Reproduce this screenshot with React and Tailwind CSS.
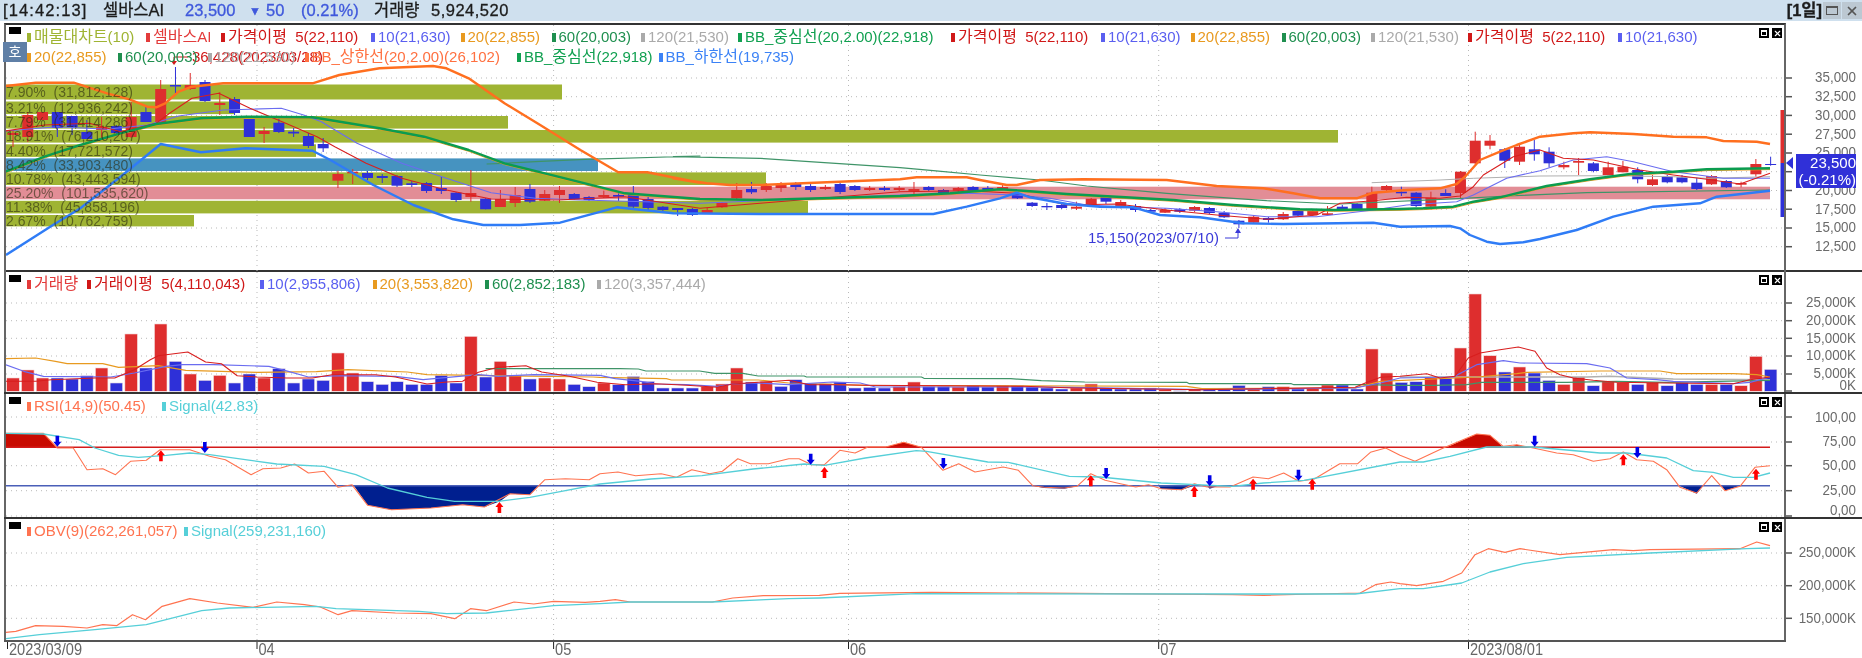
import React from 'react';
import { X } from 'lucide-react';

const RED = '#de2e2e';
const BLUE = '#2e30d8';
const barX = (i) => 13 + 14.77 * i;

// zoomed reference coords -> page coords
const z = (x0, y0, xs) => (pts) => pts.map(([x, y]) => [x0 + x / xs, y0 + y / 3]);
const pts = (list) => list.map(([x, y]) => `${x.toFixed(1)},${y.toFixed(1)}`).join(' ');

const z1 = z(0, 0, 2.24);
const z9 = z(240, 120, 3);
const z8 = z(900, 100, 3);
const z12 = z(1340, 110, 3);
const zV3 = z(0, 225, 2.529);
const zV10 = z(600, 290, 1.96);
const zV4 = z(1400, 225, 3);
const zR5 = z(0, 430, 2.529);
const zR11 = z(600, 395, 1.96);
const zR6 = z(1400, 430, 3);

const CANDLES = [
  ['R', 133, 135, 130, 147], ['R', 115, 137, 112, 142], ['R', 112, 120, 112, 120], ['B', 112, 128, 112, 137],
  ['B', 116, 127, 116, 135], ['B', 132, 139, 120, 139], ['R', 127, 130, 117, 138], ['B', 126, 133, 125, 135],
  ['R', 117, 137, 102, 138], ['B', 112, 122, 107, 122], ['R', 89, 123, 80, 125], ['B', 85, 86.5, 67, 95],
  ['R', 85, 89, 73, 90], ['B', 82, 101, 80, 102], ['R', 103, 105, 92, 115], ['B', 99, 113, 97, 115],
  ['B', 119, 137, 119, 137], ['R', 131, 134, 127, 143], ['B', 122.7, 132, 117, 133], ['B', 131.7, 133.5, 128, 137],
  ['B', 136, 146, 133, 148], ['B', 144, 148.3, 138, 152], ['R', 174, 180.7, 170.7, 188], ['R', 171.7, 173.3, 169, 184],
  ['B', 173, 178, 171, 180], ['B', 176, 178, 174, 183], ['B', 176, 185.7, 175, 187], ['B', 183.3, 185, 181, 187],
  ['B', 183, 191, 182, 193], ['B', 188, 191, 177, 194], ['B', 192.7, 200, 192, 202], ['R', 193, 197, 170, 201.7],
  ['B', 198.7, 209.3, 198, 209.3], ['R', 199, 207, 190, 207], ['R', 195, 203, 187, 207], ['B', 189, 201.7, 184, 203],
  ['R', 194, 200.7, 190, 201], ['R', 190, 195, 186, 203], ['B', 194, 199.3, 193, 200], ['B', 197, 200, 196, 201],
  ['R', 195, 197, 190.7, 198], ['B', 195, 196.7, 191.7, 201], ['B', 194, 206.7, 186, 208], ['B', 199, 208, 197, 210.7],
  ['B', 206.7, 210, 206, 211], ['B', 208, 210, 208, 216], ['B', 209, 215, 208, 216], ['R', 210, 213.3, 208, 214],
  ['R', 202.7, 207.3, 202, 208], ['R', 190, 198.3, 183, 200], ['B', 189, 192.3, 182, 194], ['R', 186, 190, 183, 192],
  ['R', 184, 188, 182, 192], ['B', 184, 187, 182, 190], ['B', 186, 190, 184, 192], ['R', 187, 189, 185, 190],
  ['B', 184, 192, 183, 194], ['B', 186, 190, 185, 191], ['R', 188, 190, 186, 191], ['B', 188, 190, 186, 191],
  ['R', 188, 190, 186, 191], ['R', 189, 191, 182, 195], ['B', 187, 190, 186, 191], ['B', 190, 193, 189, 194],
  ['R', 188, 190.7, 187, 192], ['B', 187, 190.7, 186, 192], ['B', 188, 190, 186, 191], ['R', 187, 189, 185, 190],
  ['B', 194, 198.3, 193, 199], ['B', 202.7, 206, 202, 207], ['B', 206, 207.3, 203, 210], ['B', 205, 208, 204, 209],
  ['R', 206.7, 208.7, 201.7, 210], ['R', 198.7, 206, 198, 207], ['B', 196.7, 201.7, 196, 204], ['R', 202, 206, 200, 208.3],
  ['B', 206, 210, 204, 212], ['B', 210, 211.7, 209, 213], ['R', 210, 212.7, 208, 213], ['B', 209.3, 211.7, 208, 213],
  ['R', 207, 210.7, 206, 212], ['B', 208, 213, 207, 214], ['B', 212.7, 217.3, 211, 218], ['B', 220.7, 224.3, 220, 228],
  ['R', 216.7, 222.7, 215, 224], ['B', 218, 220, 217, 222.7], ['R', 214, 219.3, 212, 220], ['B', 211, 215.7, 210, 216],
  ['R', 211, 215, 209, 216], ['R', 213.3, 215, 206, 215], ['B', 206.7, 210, 205, 211], ['B', 204, 209, 203, 209],
  ['R', 192.7, 209.3, 186.7, 210], ['R', 186, 190, 185, 191.7], ['B', 191.7, 193.3, 186.7, 196], ['B', 192.7, 206, 192, 207],
  ['R', 197.7, 206.7, 191.7, 209.3], ['B', 193, 196, 189.3, 196], ['R', 171.7, 193, 171, 198.3], ['R', 140.7, 163.3, 131.7, 164],
  ['R', 140.7, 145.7, 135, 149.3], ['B', 149.3, 160.7, 148, 168], ['R', 146.7, 161.7, 145, 165], ['B', 149.3, 154.3, 140, 160.7],
  ['B', 151.7, 163.3, 147.3, 167.3], ['R', 165, 167.3, 161.7, 169.3], ['R', 161, 162.7, 158, 175], ['B', 163.3, 171, 162, 172.3],
  ['R', 167.3, 175, 161.7, 175], ['R', 166.7, 172.3, 161, 172.3], ['B', 170, 179.3, 167.3, 183.3], ['R', 179.3, 185, 175, 186],
  ['B', 176.7, 182.3, 175, 183.3], ['B', 177.3, 182.3, 175, 183.3], ['B', 182.7, 189, 177.7, 190], ['R', 176, 184.3, 175, 185],
  ['B', 181, 187.3, 180, 188], ['R', 183, 184.7, 181.7, 187.3], ['R', 164, 174.3, 159, 176.7], ['B', 164, 165, 156.7, 165.7],
];

// [colour, top of bar in reference crop]
const VOLUME = [
  ...[['R', 465], ['R', 441], ['R', 465], ['B', 465], ['B', 468], ['B', 458], ['R', 435], ['B', 480], ['R', 333], ['B', 435],
    ['R', 303], ['B', 415], ['R', 453], ['B', 472], ['R', 457], ['B', 480], ['B', 453], ['R', 465], ['B', 437], ['B', 480],
    ['B', 468], ['B', 472], ['R', 390], ['R', 450], ['B', 476], ['B', 484], ['B', 476], ['B', 484], ['B', 484], ['B', 457],
    ['B', 480], ['R', 340], ['B', 462], ['R', 415], ['R', 458], ['B', 468], ['R', 465], ['R', 468], ['B', 484], ['B', 491]]
    .map(([c, t]) => [c, (505 - t) / 3]),
  ...[['R', 285], ['B', 290], ['B', 265], ['B', 280], ['B', 300], ['B', 300], ['B', 300], ['R', 295], ['R', 288], ['R', 240],
    ['B', 282], ['R', 280], ['B', 295], ['B', 275], ['B', 287], ['B', 287], ['B', 282], ['B', 300], ['B', 298], ['B', 300],
    ['R', 295], ['R', 282], ['B', 295], ['B', 295], ['R', 297], ['B', 292], ['B', 297], ['R', 293], ['B', 293], ['B', 297],
    ['B', 300], ['B', 303], ['R', 300], ['R', 288], ['B', 300], ['B', 303], ['B', 303], ['B', 300], ['R', 305], ['B', 308],
    ['R', 305], ['B', 305], ['B', 305], ['B', 292], ['R', 303], ['B', 296], ['R', 296], ['B', 303], ['R', 302], ['R', 291],
    ['B', 291], ['B', 303], ['R', 183], ['R', 255]]
    .map(([c, t]) => [c, (310 - t) / 3]),
  ...[['B', 478], ['B', 476], ['R', 464], ['B', 466], ['R', 375], ['R', 213], ['R', 398], ['B', 447], ['R', 432], ['B', 450],
    ['B', 472], ['R', 484], ['R', 462], ['B', 488], ['R', 475], ['R', 478], ['B', 484], ['R', 478], ['B', 488], ['B', 478],
    ['B', 484], ['R', 484], ['B', 484], ['R', 488], ['R', 400], ['B', 439]]
    .map(([c, t]) => [c, (505 - t) / 3]),
];

const BB_UPPER = [
  ...z1([[12, 258], [80, 248], [165, 248], [240, 280], [290, 298], [330, 320], [350, 322], [370, 310], [400, 275], [430, 260], [500, 250], [700, 250], [760, 225], [850, 205], [970, 198], [1000, 205], [1050, 235], [1130, 310], [1210, 375], [1300, 450], [1385, 517], [1450, 517], [1568, 548]]),
  ...z9([[1300, 175], [1400, 190], [1470, 195], [1560, 195]]),
  ...z8([[0, 238], [50, 232], [200, 232], [240, 240], [320, 255], [350, 255], [420, 240], [550, 238], [800, 240], [950, 258], [1090, 265], [1180, 280], [1260, 295], [1370, 295]]),
  ...z12([[100, 248], [200, 240], [300, 235], [350, 222], [375, 200], [420, 150], [480, 125], [530, 105], [600, 80], [700, 70], [750, 67], [880, 72], [1000, 80], [1100, 82], [1150, 93], [1250, 95], [1290, 102]]),
];
const BB_MID = [
  ...z1([[12, 515], [100, 470], [180, 435], [270, 400], [350, 372], [450, 355], [550, 350], [700, 352], [850, 385], [950, 410], [1050, 450], [1130, 490], [1250, 530], [1400, 580], [1568, 597]]),
  ...z9([[1560, 240]]),
  ...z8([[0, 288], [150, 280], [300, 268], [370, 272], [500, 282], [650, 290], [820, 300], [1000, 315], [1200, 328], [1300, 330]]),
  ...z12([[180, 297], [250, 295], [340, 290], [400, 275], [480, 262], [620, 228], [750, 208], [870, 192], [1000, 185], [1100, 178], [1290, 175]]),
];
const BB_LOW = [
  [6, 255], [53, 225],
  ...z1([[180, 625], [270, 530], [360, 432], [450, 457], [550, 445], [700, 452], [740, 480]]),
  ...z9([[400, 195], [520, 255], [640, 298], [730, 315], [840, 315], [960, 308], [1130, 262], [1300, 280], [1560, 282]]),
  ...z8([[0, 342], [100, 342], [200, 320], [300, 295], [350, 278], [390, 292], [500, 312], [600, 320], [700, 322], [780, 345], [900, 352], [1030, 370], [1150, 372], [1420, 368], [1500, 380]]),
  ...zV4([[150, 3], [180, 10], [210, 30], [260, 50], [300, 57], [370, 52], [420, 42]]),
  ...z(1400, 0, 3)([[530, 690], [640, 650], [760, 620], [900, 610], [950, 590], [1110, 572]]),
];
const MA5 = [
  ...z1([[12, 393], [100, 375], [200, 370], [270, 395], [350, 370], [380, 340], [430, 295], [490, 280], [560, 325], [640, 370], [710, 410], [750, 440], [820, 490], [900, 535], [1000, 570], [1100, 597], [1250, 600], [1400, 590], [1568, 625]]),
  ...z8([[0, 275], [200, 272], [350, 280], [500, 315], [650, 312], [800, 330], [950, 345], [1100, 358], [1250, 345]]),
  ...z12([[0, 280], [100, 272], [200, 262], [300, 265], [360, 258], [400, 230], [430, 195], [520, 140], [600, 120], [670, 145], [760, 150], [900, 180], [1000, 195], [1100, 208], [1200, 222], [1290, 190]]),
];
const MA10 = [
  ...z1([[12, 393], [100, 383], [130, 380], [240, 388], [330, 375], [400, 348], [500, 330], [630, 325], [680, 345], [720, 365], [800, 430], [900, 490], [1000, 535], [1100, 578], [1200, 595], [1300, 600], [1568, 610]]),
  ...z8([[0, 285], [200, 280], [350, 285], [450, 295], [560, 315], [700, 322], [800, 325], [950, 335], [1100, 350], [1250, 350]]),
  ...z12([[0, 312], [100, 300], [200, 285], [350, 275], [400, 255], [500, 205], [600, 182], [700, 150], [800, 140], [880, 155], [1000, 185], [1150, 205], [1290, 205]]),
];
const MA60 = [
  ...z1([[1090, 492], [1130, 490], [1200, 485], [1310, 478], [1568, 468]]),
  ...z9([[1300, 110], [1560, 115]]),
  ...z8([[0, 203], [100, 212], [240, 225], [420, 240], [560, 258], [800, 280], [1000, 295], [1100, 302]]),
  ...z12([[0, 282], [370, 265], [500, 258], [740, 248], [1290, 240]]),
];
const MA120 = z12([[95, 218], [300, 210], [400, 205], [600, 198], [800, 197], [1000, 200], [1100, 205], [1290, 200]]);

const VOL_MA5 = [
  ...zV3([[15, 475], [90, 475], [130, 470], [240, 465], [290, 465], [340, 440], [380, 410], [400, 398], [475, 387], [520, 417], [560, 422], [600, 458], [650, 462], [725, 465], [790, 465], [840, 455], [950, 455], [1000, 462], [1080, 483], [1130, 477], [1170, 475], [1210, 448], [1260, 433], [1330, 428], [1370, 447], [1440, 460], [1510, 478]]),
  ...zV10([[50, 290], [110, 287], [170, 292], [230, 298], [260, 288], [310, 283], [370, 277], [410, 290], [470, 290], [520, 292], [830, 295], [930, 300], [1180, 305], [1480, 298], [1500, 285], [1530, 268]]),
  ...zV4([[0, 460], [80, 452], [120, 465], [165, 460], [205, 405], [240, 390], [300, 380], [355, 372], [405, 385], [440, 435], [480, 455], [520, 465], [580, 472], [650, 478], [800, 480], [1000, 482], [1050, 470], [1110, 462]]),
];
const VOL_MA10 = [
  ...zV3([[15, 425], [60, 445], [110, 460], [280, 462], [340, 450], [420, 430], [460, 425], [540, 425], [680, 430], [720, 442], [780, 462], [860, 458], [1000, 460], [1070, 470], [1210, 455], [1260, 460], [1350, 455]]),
  ...zV10([[0, 262], [30, 272], [80, 280], [110, 288], [170, 290], [230, 295], [260, 288], [310, 285], [370, 290], [455, 282], [510, 285], [540, 297], [830, 297], [920, 298], [1180, 305], [1480, 300], [1530, 285]]),
  ...zV4([[0, 465], [160, 462], [230, 425], [310, 413], [360, 420], [560, 422], [630, 435], [680, 465], [770, 470], [820, 475], [1000, 482], [1050, 478], [1110, 462]]),
];
const VOL_MA20 = [
  ...zV3([[15, 407], [90, 405], [140, 415], [170, 422], [260, 422], [300, 433], [400, 428], [470, 442], [650, 448], [800, 446], [880, 440], [1030, 447], [1080, 455], [1500, 462]]),
  ...zV10([[0, 268], [130, 272], [140, 276], [310, 276], [370, 285], [520, 292], [1150, 295], [1180, 302], [1480, 300], [1530, 280]]),
  ...zV4([[230, 462], [350, 452], [380, 448], [600, 444], [780, 444], [830, 452], [1000, 452], [1070, 455], [1110, 462]]),
];
const VOL_MA60 = [
  ...zV3([[1228, 437], [1568, 437]]),
  ...zV10([[75, 243], [90, 249], [195, 249], [225, 256], [280, 256], [310, 264], [400, 264], [405, 267], [630, 267], [635, 271], [805, 272], [865, 278], [950, 282], [1150, 283], [1155, 287], [1355, 287], [1360, 290], [1500, 290]]),
  ...zV4([[0, 487], [100, 487], [200, 485], [245, 478], [500, 478], [650, 475], [800, 478], [1110, 472]]),
];
const VOL_MA120 = zV4([[0, 462], [560, 462], [630, 460], [820, 468], [1110, 470]]);

const RSI = [
  ...zR5([[15, 16], [110, 16], [145, 60], [185, 60], [220, 125], [260, 122], [292, 140], [330, 100], [370, 97], [405, 65], [480, 65], [530, 85], [570, 95], [635, 140], [665, 122], [710, 120], [745, 108], [780, 135], [820, 130], [855, 178], [890, 170], [930, 232], [990, 245], [1090, 240], [1170, 230], [1225, 237], [1290, 197], [1340, 200], [1378, 155], [1430, 152], [1490, 155]]),
  ...zR11([[0, 242], [35, 237], [70, 248], [120, 242], [150, 253], [180, 230], [215, 242], [240, 235], [270, 197], [295, 212], [330, 212], [370, 197], [390, 197], [415, 215], [440, 215], [470, 172], [500, 180], [525, 162], [560, 162], [595, 148], [630, 163], [672, 232], [703, 212], [735, 237], [790, 222], [820, 232], [848, 278], [870, 283], [910, 285], [935, 280], [962, 242], [990, 262], [1020, 272], [1050, 282], [1075, 275], [1100, 287], [1140, 290], [1165, 272], [1190, 282], [1235, 282], [1280, 252], [1310, 257], [1340, 240], [1370, 265], [1400, 258], [1450, 212], [1485, 212], [1510, 178], [1540, 165]]),
  ...zR6([[0, 82], [45, 100], [130, 60], [230, 18], [270, 22], [310, 55], [350, 50], [400, 60], [470, 75], [520, 80], [580, 100], [630, 92], [670, 72], [710, 95], [760, 100], [800, 125], [840, 178], [890, 195], [935, 143], [975, 188], [1020, 175], [1065, 118], [1110, 113]]),
];
const RSI_SIGNAL = [
  ...zR5([[15, 16], [110, 18], [200, 35], [240, 60], [300, 82], [350, 88], [420, 82], [480, 75], [530, 80], [620, 95], [700, 108], [820, 115], [900, 140], [980, 180], [1080, 208], [1150, 220], [1260, 220], [1340, 208], [1420, 190]]),
  ...zR11([[0, 273], [100, 258], [200, 248], [300, 228], [400, 213], [440, 217], [520, 195], [620, 173], [640, 175], [760, 207], [800, 208], [920, 250], [980, 252], [1100, 270], [1240, 280], [1300, 270], [1380, 262]]),
  ...zR6([[0, 102], [70, 102], [150, 85], [260, 57], [400, 57], [600, 75], [680, 75], [800, 90], [880, 128], [940, 133], [1000, 148], [1060, 148], [1110, 135]]),
];
const RSI_HOT = [
  zR5([[15, 16], [110, 16], [145, 60], [15, 60]]),
  zR11([[560, 162], [595, 148], [630, 163]]),
  zR6([[140, 58], [230, 18], [270, 22], [310, 58]]),
  zR6([[325, 58], [350, 50], [385, 58]]),
];
const RSI_COLD = [
  zR5([[895, 173], [930, 232], [990, 245], [1090, 240], [1170, 230], [1225, 237], [1265, 220], [1290, 197], [1340, 200], [1362, 173]]),
  zR11([[848, 278], [870, 285], [910, 287], [935, 280]]),
  zR11([[1095, 280], [1100, 287], [1140, 290], [1165, 278]]),
  zR11([[1190, 280], [1195, 287], [1210, 280]]),
  zR6([[838, 173], [890, 197], [910, 173]]),
  zR6([[965, 173], [975, 188], [1020, 173]]),
];
// [x, y, up?]
const RSI_ARROWS = [
  ...zR5([[145, 38], [518, 57]]).map((p) => [...p, false]),
  ...zR5([[407, 85], [1263, 240]]).map((p) => [...p, true]),
  ...zR11([[413, 197], [673, 210], [992, 240], [1195, 262], [1369, 245]]).map((p) => [...p, false]),
  ...zR11([[440, 240], [962, 265], [1165, 297], [1280, 275], [1396, 275]]).map((p) => [...p, true]),
  ...zR6([[404, 38], [712, 72]]).map((p) => [...p, false]),
  ...zR6([[670, 97], [1068, 140]]).map((p) => [...p, true]),
];

const OBV = [
  ...zR5([[15, 613], [40, 610], [90, 593], [160, 595], [220, 600], [260, 590], [295, 593], [335, 560], [368, 575], [410, 535], [480, 512], [550, 525], [640, 538], [700, 522], [770, 530], [810, 537], [855, 560], [890, 548], [1000, 555], [1090, 557], [1150, 572], [1190, 542], [1230, 548], [1300, 522], [1350, 528], [1400, 520], [1480, 523]]),
  ...zR11([[0, 625], [30, 620], [60, 627], [220, 627], [260, 615], [320, 608], [430, 607], [470, 601], [650, 598], [1240, 605], [1300, 607], [1400, 603], [1490, 600], [1520, 575], [1550, 567]]),
  ...zR6([[0, 467], [50, 473], [130, 460], [185, 435], [225, 380], [265, 362], [315, 373], [360, 362], [480, 380], [640, 365], [700, 368], [750, 365], [1020, 362], [1070, 342], [1110, 353]]),
];
const OBV_SIGNAL = [
  ...zR5([[15, 632], [100, 620], [240, 605], [370, 590], [510, 548], [580, 540], [800, 535], [850, 542], [1060, 550], [1130, 557], [1230, 555], [1400, 533]]),
  ...zR11([[0, 632], [60, 627], [220, 627], [370, 617], [430, 615], [620, 602], [1240, 603], [1480, 603]]),
  ...zR6([[0, 482], [70, 482], [185, 465], [270, 432], [370, 407], [500, 388], [750, 375], [1040, 362], [1110, 360]]),
];

// 매물대 rows: [y, height, right edge, colour, label]
const PROFILE = [
  [84.5, 15, 562, '#9fb433', '7.90%  (31,812,128)'],
  [101.5, 12.6, 234, '#9fb433', '3.21%  (12,936,242)'],
  [116, 12.6, 508, '#9fb433', '7.79%  (31,414,286)'],
  [130, 12.6, 1338, '#9fb433', '18.91%  (76,210,207)'],
  [144.3, 12.6, 316, '#9fb433', '4.40%  (17,721,572)'],
  [158.4, 12.6, 598, '#4693c0', '8.42%  (33,903,480)'],
  [172.4, 12.6, 766, '#9fb433', '10.78%  (43,443,594)'],
  [186.7, 12.6, 1770, '#e28d96', '25.20%  (101,535,620)'],
  [200.8, 12.6, 808, '#9fb433', '11.38%  (45,858,196)'],
  [215, 11.4, 194, '#9fb433', '2.67%  (10,762,759)'],
];

const GRID_X = [257, 553.6, 848.5, 1158.7, 1468.5];

const OLIVE = 'text-[#9fb433]';
const LRED = 'text-[#e33b3b]';
const DRED = 'text-[#d01818]';
const MBLUE = 'text-[#5a5ff0]';
const ORANGE = 'text-[#e89a20]';
const GREEN = 'text-[#1f8f4f]';
const GRAY = 'text-[#aaaaaa]';
const BBUP = 'text-[#ff7040]';
const BBMID = 'text-[#10a050]';
const BBLOW = 'text-[#3b82f6]';
const TEAL = 'text-[#56cfd8]';
const CORAL = 'text-[#ff7350]';

const LEGEND_MAIN = [
  [OLIVE, 'w-[119px]', '매물대차트(10)'], [LRED, 'w-[75px]', '셀바스AI'], [DRED, 'w-[150px]', '가격이평  5(22,110)'],
  [MBLUE, 'w-[89.5px]', '10(21,630)'], [ORANGE, 'w-[91px]', '20(22,855)'], [GREEN, 'w-[89.5px]', '60(20,003)'],
  [GRAY, 'w-[97px]', '120(21,530)'], [BBMID, 'w-[213px]', 'BB_중심선(20,2.00)(22,918)'],
  [DRED, 'w-[150px]', '가격이평  5(22,110)'], [MBLUE, 'w-[89.5px]', '10(21,630)'], [ORANGE, 'w-[91px]', '20(22,855)'],
  [GREEN, 'w-[89.5px]', '60(20,003)'], [GRAY, 'w-[97px]', '120(21,530)'], [DRED, 'w-[150px]', '가격이평  5(22,110)'],
  [MBLUE, 'w-[90px]', '10(21,630)'],
  [ORANGE, 'w-[91px]', '20(22,855)'], [GREEN, 'w-[89.5px]', '60(20,003)'], [GRAY, 'w-[97px]', '120(21,530)'],
  [BBUP, 'w-[212.5px]', 'BB_상한선(20,2.00)(26,102)'], [BBMID, 'w-[141.5px]', 'BB_중심선(22,918)'], [BBLOW, 'w-[140px]', 'BB_하한선(19,735)'],
];
const LEGEND_VOLUME = [
  [LRED, 'w-[60px]', '거래량'], [DRED, 'w-[173px]', '거래이평  5(4,110,043)'], [MBLUE, 'w-[112.5px]', '10(2,955,806)'],
  [ORANGE, 'w-[112.5px]', '20(3,553,820)'], [GREEN, 'w-[112px]', '60(2,852,183)'], [GRAY, 'w-[120px]', '120(3,357,444)'],
];
const LEGEND_RSI = [[CORAL, 'w-[135px]', 'RSI(14,9)(50.45)'], [TEAL, 'w-[120px]', 'Signal(42.83)']];
const LEGEND_OBV = [[CORAL, 'w-[157px]', 'OBV(9)(262,261,057)'], [TEAL, 'w-[160px]', 'Signal(259,231,160)']];

// hangul runs a touch larger, so they take the same width as the reference's glyphs
function LegendLabel({ text }) {
  return text.split(/([가-힣]+)/).map((part, i) =>
    /[가-힣]/.test(part) ? <span key={i} className="text-[16px]">{part}</span> : part
  );
}

function Legend({ items }) {
  return (
    <div className="absolute left-[21px] top-[2px] flex w-[1730px] flex-wrap text-[15px] leading-[20px] whitespace-pre">
      {items.map(([color, width, label], i) => (
        <span key={i} className={`flex shrink-0 items-center gap-[3px] ${color} ${width}`}>
          <span className="h-[9px] w-[4px] bg-current" />
          <span><LegendLabel text={label} /></span>
        </span>
      ))}
    </div>
  );
}

function PanelButtons() {
  return (
    <div className="absolute right-[2px] top-[3px] flex gap-[3px]">
      <div className="flex h-[10px] w-[10px] items-center justify-center border-2 border-black bg-white">
        <span className="h-[3px] w-[4px] bg-black" />
      </div>
      <div className="flex h-[10px] w-[10px] items-center justify-center bg-black">
        <X size={9} strokeWidth={3} className="text-white" />
      </div>
    </div>
  );
}

function Line({ data, color, width = 1 }) {
  return <polyline points={pts(data)} fill="none" stroke={color} strokeWidth={width} strokeLinejoin="round" />;
}

function Grid({ ys, top, bottom }) {
  return (
    <g stroke="#b9b9b9" strokeWidth="1" strokeDasharray="1 4">
      {ys.map((y) => <line key={y} x1="6" x2="1784" y1={y} y2={y} />)}
      {GRID_X.map((x) => <line key={x} x1={x} x2={x} y1={top} y2={bottom} />)}
    </g>
  );
}

// right hand scale: [label, tick y, baseline y]
function Scale({ top, height, labels, children }) {
  return (
    <svg viewBox={`1786 ${top} 76 ${height}`} className="block h-full w-[76px]">
      {labels.map(([label, tick, base]) => (
        <g key={label}>
          <line x1="1786" x2="1792" y1={tick} y2={tick} stroke="#555" strokeWidth="1.5" />
          <text transform={`translate(1856 ${base}) scale(1 1.14)`} textAnchor="end" fontSize="13.4" fill="#6a6a6a">{label}</text>
        </g>
      ))}
      {children}
    </svg>
  );
}

function Panel({ top, height, ticks, labels, outerBorder = true, overlay, axisOverlay, scaleExtra, children }) {
  return (
    <div className={`ml-[4px] flex ${outerBorder ? 'border-t-2 border-[#333]' : ''}`} style={{ height: height + (outerBorder ? 2 : 0) }}>
      <div className={`relative h-full w-[1782px] border-x-2 border-[#666] ${outerBorder ? '' : 'box-content border-t-2 border-t-[#333]'}`}>
        <svg viewBox={`6 ${top} 1778 ${height}`} className="absolute inset-0 h-full w-full">
          <Grid ys={ticks} top={top} bottom={top + height} />
          {children}
        </svg>
        {overlay}
        <PanelButtons />
      </div>
      <div className={`relative h-full w-[76px] ${outerBorder ? '' : 'mt-[2px]'}`}>
        <Scale top={top} height={height} labels={labels}>{scaleExtra}</Scale>
        {axisOverlay}
      </div>
    </div>
  );
}

export default function App() {
  const priceTicks = [78, 96.7, 115.4, 134.2, 153, 171.7, 190.5, 209.2, 228, 246.7];
  const priceLabels = ['35,000', '32,500', '30,000', '27,500', '25,000', '22,500', '20,000', '17,500', '15,000', '12,500']
    .map((label, i) => [label, priceTicks[i], priceTicks[i] + 4.3]);

  return (
    <div className="h-[658px] w-[1862px] overflow-hidden bg-white [font-family:'Liberation_Sans','Noto_Sans_CJK_KR',sans-serif] blur-[0.4px]">
      {/* Title bar */}
      <div className="flex h-[21px] items-center bg-[#cfe0ee] pl-[3px] text-[16.5px] leading-none text-[#1c1c1c] [-webkit-text-stroke:0.3px_currentColor]">
        <span className="w-[100px] tracking-[1.1px]">[14:42:13]</span>
        <span className="w-[82px]">셀바스AI</span>
        <span className="w-[64px] text-[#3f58dc]">23,500</span>
        <span className="w-[17px] text-[12px] text-[#3f58dc]">▼</span>
        <span className="w-[35px] text-[#3f58dc]">50</span>
        <span className="w-[73px] text-[#3f58dc]">(0.21%)</span>
        <span className="w-[57px]">거래량</span>
        <span className="tracking-[0.5px]">5,924,520</span>
        <span className="ml-auto font-bold">[1일]</span>
        <div className="ml-[1px] flex h-[17px] w-[18px] items-center justify-center bg-[#bcc8d2]">
          <span className="h-[9px] w-[12px] border border-t-2 border-[#555]" />
        </div>
        <div className="ml-[1px] flex h-[17px] w-[20px] items-center justify-center bg-[#bcc8d2]">
          <X size={14} strokeWidth={3} className="text-[#555]" />
        </div>
      </div>

      <div className="h-[2px]" />

      {/* Price panel */}
      <Panel
        top={25}
        height={247}
        ticks={priceTicks}
        labels={priceLabels}
        outerBorder={false}
        overlay={
          <>
            <Legend items={LEGEND_MAIN} />
            <div className="absolute left-[3px] top-[2px] h-[7px] w-[12px] bg-black" />
            <div className="absolute left-[-3px] top-[17px] flex h-[20px] w-[24px] items-center justify-center bg-[#5f7fa6] text-[14px] text-white">호</div>
          </>
        }
        scaleExtra={<polygon points="1786,163 1793,157 1793,169" fill={BLUE} />}
        axisOverlay={
          <div className="absolute right-[6px] top-[129px] h-[34px] w-[60px] bg-[#3030d8] text-right text-[15px] leading-[17px] text-white">
            <div>23,500</div>
            <div>(-0.21%)</div>
          </div>
        }
      >
        {PROFILE.map(([y, h, right, color]) => (
          <rect key={y} x="6" y={y} width={right - 6} height={h} fill={color} />
        ))}
        {CANDLES.map(([c, t, b, wt, wb], i) => {
          const x = barX(i);
          const fill = c === 'R' ? RED : BLUE;
          return (
            <g key={i}>
              <line x1={x} x2={x} y1={wt} y2={wb} stroke={fill} strokeWidth="1" />
              <rect x={x - 5.5} y={t} width="11" height={b - t} fill={fill} />
            </g>
          );
        })}
        <Line data={MA120} color="#b0b0b0" width={1} />
        <Line data={MA60} color="#3f9468" width={1.2} />
        <Line data={BB_MID.map(([x, y]) => [x, y + 1.3])} color="#e89a20" width={1} />
        <Line data={MA10} color="#6a6cf0" width={1.1} />
        <Line data={MA5} color="#d81e1e" width={1.1} />
        <Line data={BB_MID} color="#0b9c4f" width={2.4} />
        <Line data={BB_LOW} color="#2f7cf6" width={2.4} />
        <Line data={BB_UPPER} color="#ff6f1f" width={2.4} />
        {PROFILE.map(([y, h, , , label]) => (
          <text key={label} x="6" y={y + h / 2 + 5} fontSize="14" fill="#2b2b10" opacity="0.6" className="whitespace-pre">{label}</text>
        ))}
        {/* high / low markers */}
        <polyline points="188,57 174,57 174,63" fill="none" stroke="#d01818" />
        <polygon points="171,61 177,61 174,65" fill="#d01818" />
        <text x="192" y="62" fontSize="15" fill="#d01818">36,428(2023/03/28)</text>
        <text x="1088" y="243" fontSize="15" fill="#3a3ad8">15,150(2023/07/10)</text>
        <polyline points="1225,238 1238,238 1238,231" fill="none" stroke="#3a3ad8" />
        <polygon points="1235,233 1241,233 1238,228" fill="#3a3ad8" />
        <rect x="1780.5" y="110" width="3.5" height="53" fill={RED} />
        <rect x="1780.5" y="163" width="3.5" height="54" fill={BLUE} />
      </Panel>

      {/* Volume panel */}
      <Panel
        top={274}
        height={120}
        ticks={[305, 322.7, 340.3, 358, 376]}
        labels={[
          ['25,000K', 305, 309.3], ['20,000K', 322.7, 327], ['15,000K', 340.3, 344.6],
          ['10,000K', 358, 362.3], ['5,000K', 376, 380.3], ['0K', 393, 392],
        ]}
        overlay={
          <>
            <Legend items={LEGEND_VOLUME} />
            <div className="absolute left-[3px] top-[3px] h-[7px] w-[12px] bg-black" />
          </>
        }
      >
        {VOLUME.map(([c, h], i) => (
          <rect
            key={i}
            x={barX(i) - 6.3}
            y={393.3 - h}
            width="12.6"
            height={h}
            fill={c === 'R' ? RED : BLUE}
            stroke="#f3e6e6"
            strokeWidth="0.6"
          />
        ))}
        <Line data={VOL_MA120} color="#b0b0b0" width={1.6} />
        <Line data={VOL_MA60} color="#3f9468" width={1.2} />
        <Line data={VOL_MA20} color="#e89a20" width={1.2} />
        <Line data={VOL_MA10} color="#6a6cf0" width={1.2} />
        <Line data={VOL_MA5} color="#d81e1e" width={1.1} />
      </Panel>

      {/* RSI panel */}
      <Panel
        top={396}
        height={123}
        ticks={[419, 444, 467.7, 492.7, 518]}
        labels={[
          ['100,00', 419, 424], ['75,00', 444, 448.3], ['50,00', 467.7, 472], ['25,00', 492.7, 497], ['0,00', 518, 517],
        ]}
        overlay={
          <>
            <Legend items={LEGEND_RSI} />
            <div className="absolute left-[3px] top-[3px] h-[7px] w-[12px] bg-black" />
          </>
        }
      >
        {RSI_HOT.map((p, i) => <polygon key={i} points={pts(p)} fill="#c80a00" />)}
        {RSI_COLD.map((p, i) => <polygon key={i} points={pts(p)} fill="#001f8f" />)}
        <line x1="6" x2="1770" y1="449.3" y2="449.3" stroke="#d41a1a" strokeWidth="1.5" />
        <line x1="6" x2="1770" y1="487.7" y2="487.7" stroke="#4a5fb8" strokeWidth="1.5" />
        <Line data={RSI} color="#ff7350" width={1.1} />
        <Line data={RSI_SIGNAL} color="#56cfd8" width={1.3} />
        {RSI_ARROWS.map(([x, y, up], i) => (
          <polygon
            key={i}
            points={
              up
                ? `${x},${y - 6} ${x + 4},${y - 1} ${x + 1.8},${y - 1} ${x + 1.8},${y + 5} ${x - 1.8},${y + 5} ${x - 1.8},${y - 1} ${x - 4},${y - 1}`
                : `${x},${y + 6} ${x + 4},${y + 1} ${x + 1.8},${y + 1} ${x + 1.8},${y - 5} ${x - 1.8},${y - 5} ${x - 1.8},${y + 1} ${x - 4},${y + 1}`
            }
            fill={up ? '#ff0000' : '#0000e6'}
          />
        ))}
      </Panel>

      {/* OBV panel */}
      <Panel
        top={521}
        height={121}
        ticks={[555, 587.7, 620.3]}
        labels={[['250,000K', 555, 559.3], ['200,000K', 587.7, 592], ['150,000K', 620.3, 624.6]]}
        overlay={
          <>
            <Legend items={LEGEND_OBV} />
            <div className="absolute left-[3px] top-[3px] h-[7px] w-[12px] bg-black" />
          </>
        }
      >
        <Line data={OBV} color="#ff7350" width={1.2} />
        <Line data={OBV_SIGNAL} color="#56cfd8" width={1.3} />
      </Panel>

      {/* Date axis */}
      <div className="ml-[4px] h-[16px] w-[1782px] border-t-2 border-[#555]">
        <svg viewBox="4 644 1782 14" className="block h-full w-full">
          {[[7.5, '2023/03/09'], [257, '04'], [553.6, '05'], [848.5, '06'], [1158.7, '07'], [1468.5, '2023/08/01']].map(([x, label]) => (
            <g key={label}>
              <line x1={x} x2={x} y1="644" y2="651" stroke="#222" />
              <text transform={`translate(${x + 1.5} 656.5) scale(1 1.14)`} fontSize="14.6" fill="#666">{label}</text>
            </g>
          ))}
        </svg>
      </div>
    </div>
  );
}
